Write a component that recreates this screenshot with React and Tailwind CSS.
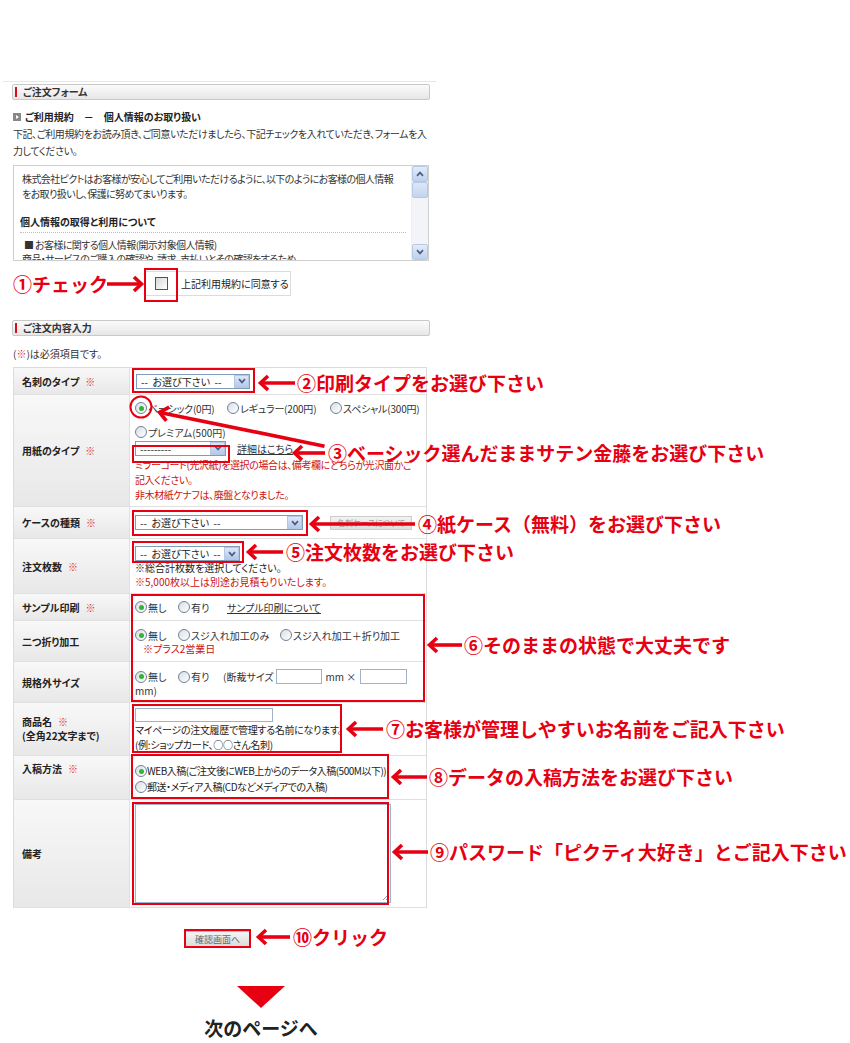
import React from 'react';

const RED = '#e60012';

function Radio({ on }) {
  return (
    <span className="inline-flex w-[12px] h-[12px] shrink-0 rounded-full border border-[#6f8298] bg-gradient-to-br from-[#d9dee5] to-white items-center justify-center">
      {on && <span className="w-[5px] h-[5px] rounded-full bg-[#2fb52f]" />}
    </span>
  );
}

function Select({ className, text }) {
  return (
    <div className={`flex items-center h-[15px] border border-[#7f9db9] bg-white ${className}`}>
      <span className="flex-1 min-w-0 pl-[4px] text-[10px] leading-[13px] text-[#222] whitespace-nowrap">{text}</span>
      <span className="w-[15px] h-[13px] shrink-0 bg-gradient-to-b from-[#dde7f8] to-[#b4c8ea] border border-[#b6c7e3] flex items-center justify-center">
        <svg width="8" height="6" viewBox="0 0 8 6">
          <path d="M1 1.2 L4 4.4 L7 1.2" stroke="#4b5f84" strokeWidth="1.7" fill="none" />
        </svg>
      </span>
    </div>
  );
}

function Req() {
  return <span className="ml-[6px] text-[#e03030]">※</span>;
}

function Row({ className, label, labelClass = 'items-center', children }) {
  return (
    <div className={`flex border-b border-[#e0e0e0] ${className}`}>
      <div className={`w-[116px] shrink-0 flex pl-[8px] bg-gradient-to-b from-[#f8f8f8] to-[#e8e8e8] border-r border-[#e0e0e0] font-bold text-[10px] text-[#222] ${labelClass}`}>
        {label}
      </div>
      <div className="flex-1 pl-[5px] text-[10px] text-[#333]">{children}</div>
    </div>
  );
}

function HeaderBar({ title }) {
  return (
    <div className="h-[16px] flex items-center border border-[#c9c9c9] rounded-[2px] bg-gradient-to-b from-[#fbfbfb] to-[#e7e7e7]">
      <span className="ml-[2px] w-[2px] h-[10px] bg-[#d0101b]" />
      <span className="ml-[6px] text-[10px] font-bold text-[#333] leading-none">{title}</span>
    </div>
  );
}

function LeftArrow({ x, y, to }) {
  return (
    <g stroke={RED} strokeWidth="3.6" fill="none">
      <line x1={x + 2} y1={y} x2={to} y2={y} />
      <polyline points={`${x + 9},${y - 7} ${x + 1.5},${y} ${x + 9},${y + 7}`} />
    </g>
  );
}

function Note({ className, children }) {
  return (
    <div className={`absolute text-[19px] font-bold leading-none whitespace-nowrap text-[#e60012] ${className}`}>
      {children}
    </div>
  );
}

const PICK = '--\u00a0\u00a0お選び下さい\u00a0\u00a0--';

export default function App() {
  return (
    <div className="relative w-[850px] h-[1043px] bg-white overflow-hidden font-['Noto_Sans_CJK_JP','Noto_Sans',sans-serif]">
      <div className="pt-[81px] [font-feature-settings:'palt']">
        <div className="ml-[3px] w-[433px] h-px bg-[#e6e6e6]" />

        <div className="ml-[12px] w-[418px] mt-[2px]">
          <HeaderBar title="ご注文フォーム" />

          {/* 利用規約 */}
          <div className="mt-[11px] h-[12px] flex items-center">
            <span className="ml-[1px] w-[8px] h-[8px] bg-[#888] flex items-center justify-center">
              <span className="w-0 h-0 border-y-[2.5px] border-y-transparent border-l-[3px] border-l-white" />
            </span>
            <span className="ml-[4px] text-[10px] font-bold text-[#222] leading-none">ご利用規約　－　個人情報のお取り扱い</span>
          </div>
          <div className="mt-[2px] pl-[1px] text-[10px] leading-[17px] text-[#333] whitespace-nowrap tracking-[-0.4px]">
            <div>下記、ご利用規約をお読み頂き、ご同意いただけましたら、下記チェックを入れていただき、フォームを入</div>
            <div>力してください。</div>
          </div>

          <div className="mt-[6px] ml-px w-[416px] h-[96px] flex border border-[#cfcfcf] bg-white">
            <div className="flex-1 overflow-hidden pl-[8px] pt-[5px] text-[10px] text-[#333] whitespace-nowrap tracking-[-0.6px]">
              <div className="leading-[15px]">株式会社ピクトはお客様が安心してご利用いただけるように、以下のようにお客様の個人情報</div>
              <div className="leading-[15px]">をお取り扱いし、保護に努めてまいります。</div>
              <div className="mt-[14px] -ml-[2px] leading-[14px] font-bold text-[#222] tracking-normal">個人情報の取得と利用について</div>
              <div className="mt-[3px] -ml-[2px] w-[386px] border-t border-dotted border-[#bdbdbd]" />
              <div className="mt-[5px] ml-[2px] leading-[14px]">■ お客様に関する個人情報(開示対象個人情報)</div>
              <div className="leading-[14px]">商品・サービスのご購入の確認や、請求、支払いとその確認をするため</div>
            </div>
            <div className="w-[17px] flex flex-col bg-[#f2f4f8] border-l border-[#eef0f4]">
              <span className="h-[16px] bg-gradient-to-b from-[#e3ecfa] to-[#bdd0ee] border border-[#b7c8e4] rounded-[2px] flex items-center justify-center">
                <svg width="8" height="6" viewBox="0 0 8 6"><path d="M1 4.8 L4 1.6 L7 4.8" stroke="#4b5f84" strokeWidth="1.7" fill="none" /></svg>
              </span>
              <span className="h-[16px] bg-gradient-to-b from-[#dde7f8] to-[#c3d4ee] border border-[#b7c8e4] rounded-[2px]" />
              <span className="flex-1" />
              <span className="h-[16px] bg-gradient-to-b from-[#e3ecfa] to-[#bdd0ee] border border-[#b7c8e4] rounded-[2px] flex items-center justify-center">
                <svg width="8" height="6" viewBox="0 0 8 6"><path d="M1 1.2 L4 4.4 L7 1.2" stroke="#4b5f84" strokeWidth="1.7" fill="none" /></svg>
              </span>
            </div>
          </div>

          <div className="mt-[10px] ml-[132px] w-[147px] h-[25px] flex items-center border border-[#dcdcdc] bg-white">
            <span className="ml-[10px] w-[13px] h-[13px] border border-[#3d5876] bg-gradient-to-br from-[#d8d8d8] to-white" />
            <span className="ml-[13px] text-[10px] text-[#222]">上記利用規約に同意する</span>
          </div>

          <div className="mt-[24px]">
            <HeaderBar title="ご注文内容入力" />
          </div>
          <div className="mt-[11px] pl-[1px] text-[10px] leading-[14px] text-[#333]">
            (<span className="text-[#e03030]">※</span>)は必須項目です。
          </div>

          {/* 注文テーブル */}
          <div className="mt-[6px] ml-px w-[414px] border border-b-0 border-[#dcdcdc]">
            <Row className="h-[27px]" label={<>名刺のタイプ<Req /></>}>
              <div className="h-full flex items-center pl-px">
                <Select className="w-[114px]" text={PICK} />
              </div>
            </Row>

            <Row className="h-[112px]" label={<>用紙のタイプ<Req /></>}>
              <div className="pt-[6px] flex items-center h-[20px] whitespace-nowrap tracking-[-0.2px]">
                <span className="w-[92px] flex items-center"><Radio on /><span className="ml-px">ベーシック(0円)</span></span>
                <span className="w-[103px] flex items-center"><Radio /><span className="ml-px">レギュラー(200円)</span></span>
                <span className="flex items-center"><Radio /><span className="ml-px">スペシャル(300円)</span></span>
              </div>
              <div className="mt-[10px] flex items-center h-[14px]">
                <Radio /><span className="ml-px">プレミアム(500円)</span>
              </div>
              <div className="mt-[1px] h-[16px] flex items-center">
                <Select className="w-[91px]" text="---------" />
                <span className="ml-[11px] underline text-[#333]">詳細はこちら</span>
              </div>
              <div className="mt-[1px] text-[#cc1111] leading-[15px] whitespace-nowrap tracking-[-0.4px]">
                <div>ミラーコート(光沢紙)を選択の場合は、備考欄にどちらが光沢面かご</div>
                <div>記入ください。</div>
                <div>非木材紙ケナフは、廃盤となりました。</div>
              </div>
            </Row>

            <Row className="h-[32px]" label={<>ケースの種類<Req /></>}>
              <div className="h-full flex items-center">
                <Select className="w-[168px]" text={PICK} />
                <span className="ml-[27px] w-[82px] h-[14px] flex items-center justify-center bg-gradient-to-b from-[#f3f3f3] to-[#dedede] border border-[#cccccc] text-[8px] text-[#999] whitespace-nowrap">名刺ケースについて</span>
              </div>
            </Row>

            <Row className="h-[55px]" label={<>注文枚数<Req /></>}>
              <div className="pt-[7px]">
                <Select className="w-[105px]" text={PICK} />
              </div>
              <div className="leading-[14px] whitespace-nowrap">
                <div className="text-[#222]">※総合計枚数を選択してください。</div>
                <div className="text-[#cc1111]">※5,000枚以上は別途お見積もりいたします。</div>
              </div>
            </Row>

            <Row className="h-[27px]" label={<>サンプル印刷<Req /></>}>
              <div className="h-full flex items-center whitespace-nowrap">
                <span className="w-[43px] flex items-center"><Radio on /><span className="ml-px">無し</span></span>
                <span className="w-[49px] flex items-center"><Radio /><span className="ml-px">有り</span></span>
                <span className="underline">サンプル印刷について</span>
              </div>
            </Row>

            <Row className="h-[41px]" label="二つ折り加工">
              <div className="pt-[7px] h-[21px] flex items-center whitespace-nowrap">
                <span className="w-[43px] flex items-center"><Radio on /><span className="ml-px">無し</span></span>
                <span className="w-[102px] flex items-center"><Radio /><span className="ml-px">スジ入れ加工のみ</span></span>
                <span className="flex items-center"><Radio /><span className="ml-px">スジ入れ加工＋折り加工</span></span>
              </div>
              <div className="ml-[8px] leading-[14px] text-[#cc1111]">※プラス2営業日</div>
            </Row>

            <Row className="h-[41px]" label="規格外サイズ">
              <div className="pt-[7px] h-[22px] flex items-center whitespace-nowrap">
                <span className="w-[43px] flex items-center"><Radio on /><span className="ml-px">無し</span></span>
                <span className="w-[45px] flex items-center"><Radio /><span className="ml-px">有り</span></span>
                <span>(断裁サイズ</span>
                <span className="ml-[2px] w-[46px] h-[15px] border border-[#9fb2c8] bg-white" />
                <span className="ml-[4px]">mm ×</span>
                <span className="ml-[4px] w-[47px] h-[15px] border border-[#9fb2c8] bg-white" />
              </div>
              <div className="leading-[14px]">mm)</div>
            </Row>

            <Row className="h-[53px]" label={<div className="leading-[14px]"><div>商品名<Req /></div><div>(全角22文字まで)</div></div>}>
              <div className="pt-[5px]">
                <span className="block w-[138px] h-[14px] border border-[#9fb2c8] bg-white" />
              </div>
              <div className="leading-[15px] whitespace-nowrap text-[#222] tracking-[-0.3px]">
                <div>マイページの注文履歴で管理する名前になります。</div>
                <div>(例:ショップカード、○○さん名刺)</div>
              </div>
            </Row>

            <Row className="h-[44px]" labelClass="items-start pt-[6px] leading-[14px]" label={<>入稿方法<Req /></>}>
              <div className="pt-[7px] leading-[16px] whitespace-nowrap text-[#222] tracking-[-0.5px]">
                <div className="flex items-center"><Radio on /><span>WEB入稿(ご注文後にWEB上からのデータ入稿(500M以下))</span></div>
                <div className="flex items-center"><Radio /><span>郵送・メディア入稿(CDなどメディアでの入稿)</span></div>
              </div>
            </Row>

            <Row className="h-[108px]" label="備考">
              <div className="pt-[4px]">
                <div className="relative w-[256px] h-[99px] border border-[#9fb2c8] bg-white">
                  <svg className="absolute right-[1px] bottom-[1px]" width="7" height="7" viewBox="0 0 7 7">
                    <path d="M6 1 L1 6 M6 4 L4 6" stroke="#999" strokeWidth="1" />
                  </svg>
                </div>
              </div>
            </Row>
          </div>

          <div className="mt-[23px] ml-[173px] w-[65px] h-[16px] flex items-center justify-center border border-[#bdbdbd] bg-gradient-to-b from-[#f4f4f4] to-[#dcdcdc] text-[9px] text-[#666] leading-none">
            確認画面へ
          </div>

          <div className="ml-[149px] w-[200px] flex flex-col items-center">
            <svg className="mt-[39px]" width="48" height="22" viewBox="0 0 48 22">
              <polygon points="0,0 48,0 24,22" fill={RED} />
            </svg>
            <div className="mt-[8px] text-[19px] font-bold leading-[24px] text-[#222] [font-feature-settings:normal]">次のページへ</div>
          </div>
        </div>
      </div>

      {/* 赤枠と矢印 */}
      <svg className="absolute left-0 top-0 pointer-events-none" width="850" height="1043" viewBox="0 0 850 1043">
        <g stroke={RED} strokeWidth="2" fill="none">
          <rect x="145" y="269" width="32" height="32" />
          <rect x="133" y="369" width="121" height="23" />
          <circle cx="141" cy="407" r="10.5" />
          <rect x="133" y="446" width="96" height="16" />
          <rect x="133" y="511" width="174" height="24" />
          <rect x="133" y="542" width="110" height="20" />
          <rect x="132" y="595" width="292" height="106" />
          <rect x="133" y="705" width="208" height="47" />
          <rect x="132" y="755" width="256" height="43" />
          <rect x="133" y="803" width="255" height="101" />
          <rect x="185" y="930" width="65" height="17" />
        </g>
        <g stroke={RED} strokeWidth="3.6" fill="none">
          <line x1="107" y1="284" x2="141" y2="284" />
          <polyline points="134,277 141.5,284 134,291" />
        </g>
        <LeftArrow x={259} y={383} to={295} />
        <LeftArrow x={293} y={453} to={325} />
        <LeftArrow x={310} y={524} to={415} />
        <LeftArrow x={247} y={552} to={283} />
        <LeftArrow x={428} y={645} to={462} />
        <LeftArrow x={347} y={729} to={383} />
        <LeftArrow x={392} y={777} to={427} />
        <LeftArrow x={393} y={852} to={428} />
        <LeftArrow x={257} y={937} to={290} />
        <g transform="translate(158 412) rotate(11.6)" stroke={RED} strokeWidth="3.6" fill="none">
          <line x1="2" y1="0" x2="170" y2="0" />
          <polyline points="10,-7 1.5,0 10,7" />
        </g>
      </svg>

      <Note className="left-[13px] top-[274px]">①チェック</Note>
      <Note className="left-[297px] top-[373px]">②印刷タイプをお選び下さい</Note>
      <Note className="left-[328px] top-[443px]">③ベーシック選んだままサテン金藤をお選び下さい</Note>
      <Note className="left-[418px] top-[514px]">④紙ケース（無料）をお選び下さい</Note>
      <Note className="left-[286px] top-[542px]">⑤注文枚数をお選び下さい</Note>
      <Note className="left-[464px] top-[635px]">⑥そのままの状態で大丈夫です</Note>
      <Note className="left-[386px] top-[719px]">⑦お客様が管理しやすいお名前をご記入下さい</Note>
      <Note className="left-[429px] top-[767px]">⑧データの入稿方法をお選び下さい</Note>
      <Note className="left-[430px] top-[842px]">⑨パスワード「ピクティ大好き」とご記入下さい</Note>
      <Note className="left-[293px] top-[927px]">⑩クリック</Note>
    </div>
  );
}
